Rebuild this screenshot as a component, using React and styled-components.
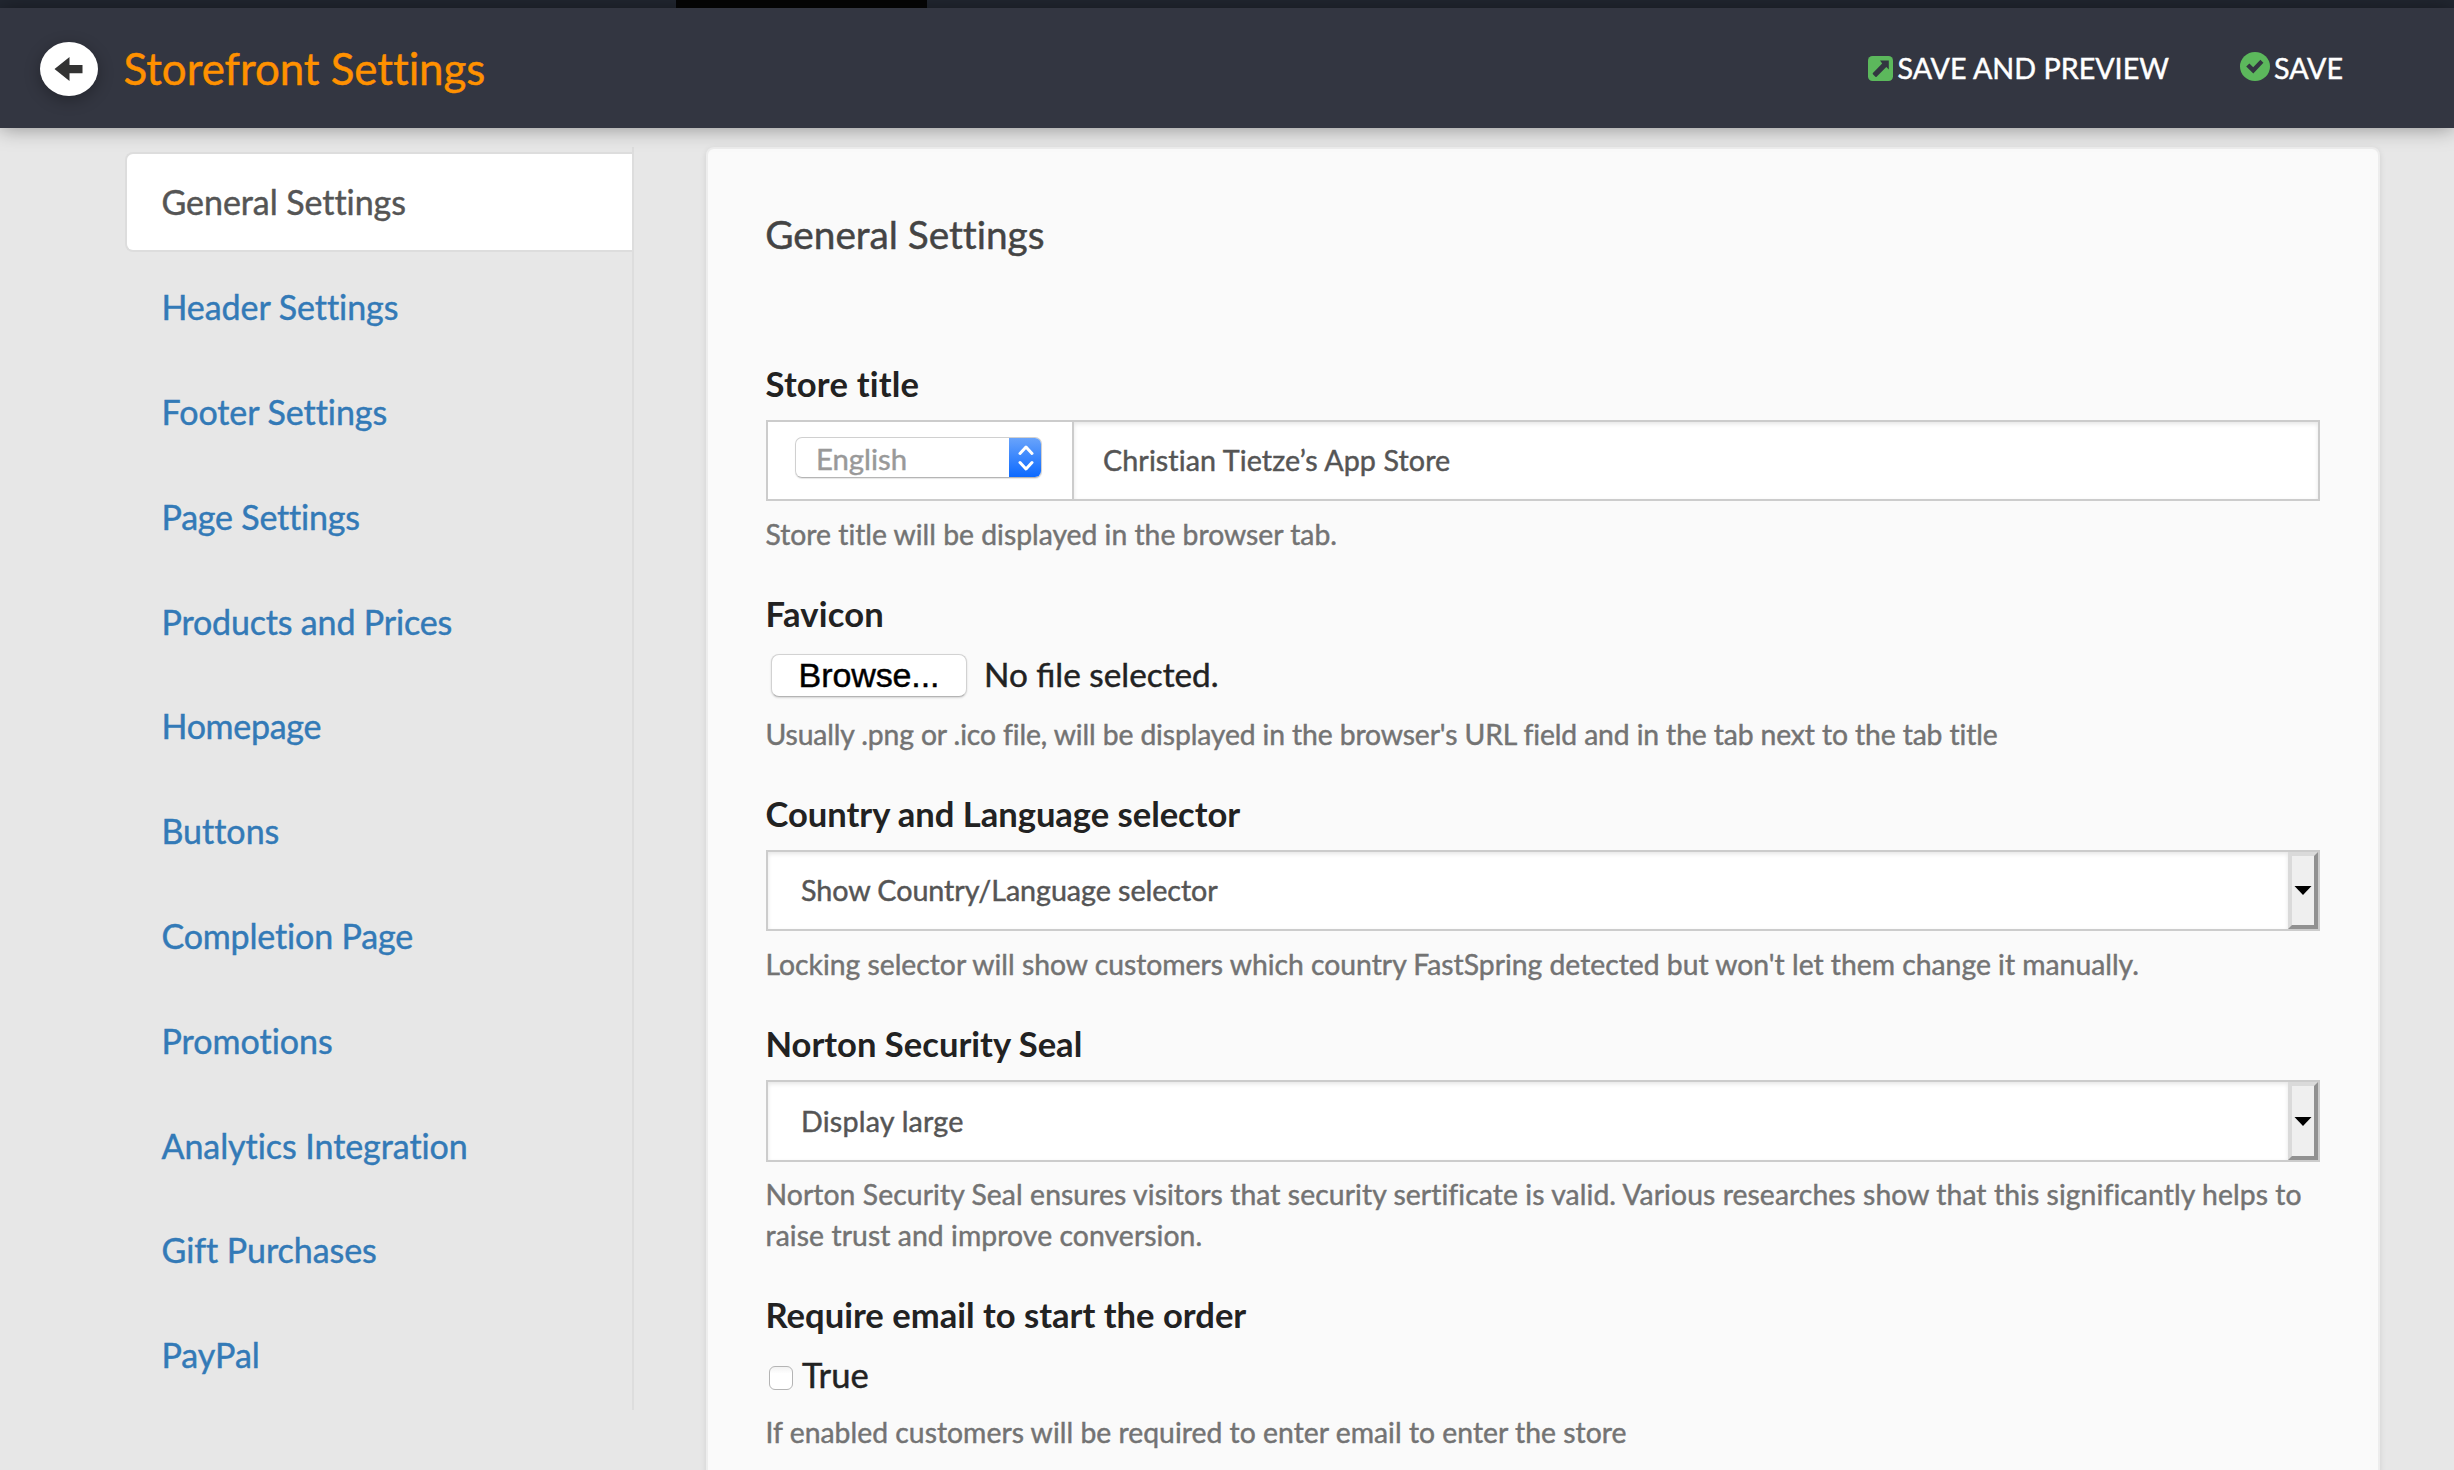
import React from "react";
import styled, { createGlobalStyle } from "styled-components";

const GlobalStyle = createGlobalStyle`
  * { box-sizing: border-box; }
  html, body { margin: 0; height: 1470px; overflow: hidden; }
  body {
    background: #e7e7e7;
    font-family: Lato, "Open Sans", sans-serif;
    font-size: 34px;
    font-variant-ligatures: none;
    -webkit-text-stroke: 0.45px;
    color: #222;
  }
`;

const Page = styled.div`
  display: flex;
  flex-direction: column;
  width: 2454px;
  height: 1470px;
  overflow: hidden;
`;

const TopStrip = styled.div`
  flex: none;
  height: 8px;
  padding-left: 676px;
  background: #222731;
`;

const ActiveMark = styled.div`
  width: 251px;
  height: 8px;
  background: #050505;
`;

const Header = styled.header`
  position: relative;
  z-index: 1;
  flex: none;
  display: flex;
  align-items: center;
  height: 120px;
  padding: 0 111px 0 40px;
  background: #333641;
  box-shadow: 0 0 20px rgba(0, 0, 0, 0.4);
`;

const BackButton = styled.button`
  display: flex;
  align-items: center;
  justify-content: center;
  width: 58px;
  height: 54px;
  margin: 2px 25.5px 0 0;
  padding: 0 1px 0 0;
  border: 0;
  border-radius: 50%;
  background: #fff;
  box-shadow: 0 4px 16px rgba(0, 0, 0, 0.3);
`;

const Title = styled.h1`
  margin: 0;
  font-size: 43.9px;
  line-height: 60px;
  font-weight: 400;
  letter-spacing: -0.06px;
  color: #ff9100;
`;

const Actions = styled.div`
  display: flex;
  gap: 71px;
  margin-left: auto;
`;

const Action = styled.a`
  display: flex;
  align-items: center;
  gap: ${(p) => p.$gap}px;
  font-size: 28.7px;
  line-height: 40px;
  color: #fff;

  svg {
    display: block;
    margin-top: ${(p) => p.$shift}px;
  }
`;

const Body = styled.div`
  display: flex;
  align-items: flex-start;
  padding: 19px 74px 0 124.5px;
`;

const Nav = styled.nav`
  flex: none;
  width: 509.5px;
  height: 1263px;
  padding-top: 5px;
  border-right: 2px solid #ddd;
`;

const NavItem = styled.a`
  display: flex;
  align-items: center;
  height: 99.8px;
  margin: 0 0 5px;
  padding: 1px 0 0 35px;
  border: 2px solid ${(p) => (p.$active ? "#ddd" : "transparent")};
  border-right: 0;
  border-radius: 8px 0 0 8px;
  background: ${(p) => (p.$active ? "#fff" : "transparent")};
  color: ${(p) => (p.$active ? "#555" : "#337ab7")};
  line-height: 48px;
  letter-spacing: ${(p) => p.$track}px;
`;

const Panel = styled.main`
  flex: 1;
  height: 1400px;
  margin-left: 72px;
  padding: 62px 58px 0;
  border: 2px solid #ededed;
  border-radius: 8px;
  background: #fafafa;
  box-shadow: 0 2px 6px rgba(0, 0, 0, 0.1);
`;

const Heading = styled.h2`
  margin: 0 0 102px -0.7px;
  font-size: 38.8px;
  line-height: 46px;
  font-weight: 400;
  letter-spacing: -0.05px;
  color: #444;
`;

const Group = styled.section`
  margin-bottom: 35px;
`;

const Label = styled.div`
  margin-left: -0.5px;
  font-size: 34.6px;
  line-height: 49px;
  font-weight: 700;
  letter-spacing: ${(p) => p.$track || 0}px;
  -webkit-text-stroke: 0;
`;

const Help = styled.p`
  position: relative;
  top: 1px;
  margin: ${(p) => p.$top ?? 12}px 0 0 -0.5px;
  font-size: 28.3px;
  line-height: 41px;
  letter-spacing: ${(p) => p.$track || 0}px;
  color: #737373;
`;

const Field = styled.div`
  display: flex;
  height: ${(p) => p.$height || 81}px;
  margin-top: 12px;
  border: 2px solid #ccc;
  background: #fff;
`;

const FieldText = styled.div`
  flex: 1;
  display: flex;
  align-items: center;
  padding: 0 0 1px ${(p) => p.$left}px;
  box-shadow: inset 0 2px 4px rgba(0, 0, 0, 0.1);
  font-size: 28.7px;
  letter-spacing: ${(p) => p.$track || 0}px;
  color: #555;
`;

const Addon = styled.div`
  width: 306px;
  padding: 15px 0 0 27px;
  border-right: 2px solid #ccc;
`;

const LanguageSelect = styled.div`
  display: flex;
  width: 247px;
  height: 41px;
  border: 1px solid #d0d0d0;
  border-bottom-color: #b5b5b5;
  border-radius: 7px;
  overflow: hidden;
  font-size: 29.3px;
  line-height: 41px;
  color: #999;
  box-shadow: 0 1px 1px rgba(0, 0, 0, 0.1);
`;

const LanguageName = styled.span`
  flex: 1;
  padding-left: 20px;
`;

const Stepper = styled.span`
  display: flex;
  align-items: center;
  justify-content: center;
  width: 33px;
  margin: -1px -1px -1px 0;
  background: linear-gradient(#6ba5fb, #0a68ff);
`;

const DropButton = styled.span`
  display: flex;
  align-items: center;
  justify-content: center;
  width: 30px;
  border: 4px solid;
  border-color: #dadada #919191 #919191 #dadada;
  background: #efefef;
`;

const FileRow = styled.div`
  display: flex;
  align-items: center;
  height: 75px;
  padding-left: 5px;
`;

const Browse = styled.button`
  width: 196px;
  height: 43px;
  margin-right: 17px;
  padding: 0 0 1px;
  border: 1px solid #d2d2d2;
  border-bottom-color: #b4b4b4;
  border-radius: 8px;
  background: #fff;
  box-shadow: 0 1px 2px rgba(0, 0, 0, 0.15);
  font-family: "Liberation Sans", Arial, sans-serif;
  font-size: 34px;
  line-height: 38px;
  letter-spacing: -0.1px;
  color: #000;
`;

const FileName = styled.span`
  padding-bottom: 3px;
  font-size: 33.3px;
  line-height: 48px;
  font-variant-ligatures: normal;
`;

const CheckRow = styled.label`
  display: flex;
  align-items: center;
  height: 72px;
  padding: 0 0 2px 3px;
  font-size: 34.6px;
`;

const CheckBox = styled.input`
  appearance: none;
  width: 24px;
  height: 24px;
  margin: 8px 9px 0 0;
  border: 1.5px solid #b4b4b4;
  border-radius: 6px;
  background: linear-gradient(#f2f2f2, #fff 30%);
`;

const ArrowIcon = () => (
  <svg width="29" height="24" viewBox="0 0 29 24" fill="#333">
    <path d="M0.5 12 15.5 0V8H28.5V16.2H15.5V24Z" />
  </svg>
);

const PreviewIcon = () => (
  <svg width="25" height="25" viewBox="0 0 25 25">
    <rect width="25" height="25" rx="4.5" fill="#5cb85c" />
    <path
      fill="#333641"
      d="M12 4.5H20.8V13.4L18.3 11 8.6 20.8Q8 21.3 7.4 20.8L4.9 18.2Q4.4 17.6 4.9 17L14.2 7.6Z"
    />
  </svg>
);

const CheckIcon = () => (
  <svg width="30" height="29" viewBox="0 0 30 29">
    <ellipse cx="15" cy="14.5" rx="15" ry="14.5" fill="#5cb85c" />
    <path
      fill="#333641"
      d="M6.2 14.6 9.4 11.6 13.2 15.3 20.4 7.8 23.4 10.8 13.3 21.4Z"
    />
  </svg>
);

const StepperIcon = () => (
  <svg width="16" height="28" viewBox="0 0 16 28" fill="none" stroke="#fff" strokeWidth="3" strokeLinecap="round" strokeLinejoin="round">
    <path d="M2 9.5 8 3 14 9.5M2 18.5 8 25 14 18.5" />
  </svg>
);

const CaretIcon = () => (
  <svg width="18" height="9" viewBox="0 0 18 9">
    <path d="M0.5 0H17.5L9 9Z" fill="#000" />
  </svg>
);

const sections = [
  { name: "General Settings", track: -0.06 },
  { name: "Header Settings", track: -0.06 },
  { name: "Footer Settings", track: -0.06 },
  { name: "Page Settings", track: -0.2 },
  { name: "Products and Prices", track: -0.17 },
  { name: "Homepage", track: -0.3 },
  { name: "Buttons", track: 0 },
  { name: "Completion Page", track: -0.17 },
  { name: "Promotions", track: 0 },
  { name: "Analytics Integration", track: -0.06 },
  { name: "Gift Purchases", track: -0.06 },
  { name: "PayPal", track: 0 },
];

const SelectField = ({ value, height, track }) => (
  <Field $height={height}>
    <FieldText $left={33} $track={track}>
      {value}
    </FieldText>
    <DropButton>
      <CaretIcon />
    </DropButton>
  </Field>
);

export default function App() {
  return (
    <Page>
      <GlobalStyle />
      <TopStrip>
        <ActiveMark />
      </TopStrip>
      <Header>
        <BackButton aria-label="Back">
          <ArrowIcon />
        </BackButton>
        <Title>Storefront Settings</Title>
        <Actions>
          <Action $gap={5} $shift={1}>
            <PreviewIcon />
            SAVE AND PREVIEW
          </Action>
          <Action $gap={4} $shift={-3}>
            <CheckIcon />
            SAVE
          </Action>
        </Actions>
      </Header>
      <Body>
        <Nav>
          {sections.map(({ name, track }, i) => (
            <NavItem key={name} $active={i === 0} $track={track}>
              {name}
            </NavItem>
          ))}
        </Nav>
        <Panel>
          <Heading>General Settings</Heading>
          <Group>
            <Label $track={0.18}>Store title</Label>
            <Field>
              <Addon>
                <LanguageSelect>
                  <LanguageName>English</LanguageName>
                  <Stepper>
                    <StepperIcon />
                  </Stepper>
                </LanguageSelect>
              </Addon>
              <FieldText $left={29} $track={0.09}>
                Christian Tietze’s App Store
              </FieldText>
            </Field>
            <Help>Store title will be displayed in the browser tab.</Help>
          </Group>
          <Group>
            <Label $track={0.2}>Favicon</Label>
            <FileRow>
              <Browse>Browse...</Browse>
              <FileName>No file selected.</FileName>
            </FileRow>
            <Help $top={0} $track={-0.12}>
              Usually .png or .ico file, will be displayed in the browser's URL field and in the tab next to the tab title
            </Help>
          </Group>
          <Group>
            <Label $track={-0.04}>Country and Language selector</Label>
            <SelectField value="Show Country/Language selector" track={-0.06} />
            <Help>
              Locking selector will show customers which country FastSpring detected but won't let them change it manually.
            </Help>
          </Group>
          <Group>
            <Label>Norton Security Seal</Label>
            <SelectField value="Display large" height={82} track={0.2} />
            <Help $top={11} $track={0.09}>
              Norton Security Seal ensures visitors that security sertificate is valid. Various researches show that this
              significantly helps to raise trust and improve conversion.
            </Help>
          </Group>
          <Group>
            <Label>Require email to start the order</Label>
            <CheckRow>
              <CheckBox type="checkbox" />
              True
            </CheckRow>
            <Help $top={0} $track={0.03}>
              If enabled customers will be required to enter email to enter the store
            </Help>
          </Group>
        </Panel>
      </Body>
    </Page>
  );
}
